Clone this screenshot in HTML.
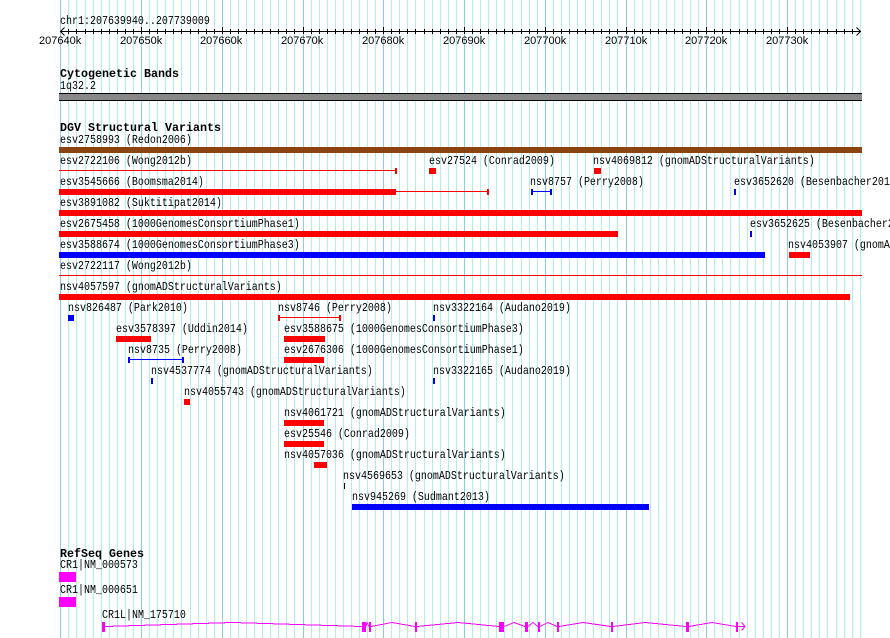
<!DOCTYPE html>
<html>
<head>
<meta charset="utf-8">
<title>Genome browser</title>
<style>
html,body{margin:0;padding:0;background:#fff;width:890px;height:638px;overflow:hidden}
svg{display:block}
text{font-family:"Liberation Mono",monospace;font-size:12px;fill:#000;transform-box:fill-box;transform-origin:0 0;transform:scaleX(.8333)}
text.b{font-weight:bold;font-size:12px;transform:scaleX(.9722)}
text.s{font-family:"Liberation Sans",sans-serif;font-size:11px;transform:none}
.c rect,.l,.x{shape-rendering:crispEdges}
</style>
</head>
<body>
<svg width="890" height="638" viewBox="0 0 890 638" xmlns="http://www.w3.org/2000/svg">
<path class="x" stroke="#afeeee" stroke-width="1" fill="none" d="M68.5 0V638M76.5 0V638M85.5 0V638M93.5 0V638M101.5 0V638M109.5 0V638M117.5 0V638M125.5 0V638M133.5 0V638M149.5 0V638M157.5 0V638M165.5 0V638M173.5 0V638M181.5 0V638M190.5 0V638M198.5 0V638M206.5 0V638M214.5 0V638M230.5 0V638M238.5 0V638M246.5 0V638M254.5 0V638M262.5 0V638M270.5 0V638M278.5 0V638M286.5 0V638M294.5 0V638M311.5 0V638M319.5 0V638M327.5 0V638M335.5 0V638M343.5 0V638M351.5 0V638M359.5 0V638M367.5 0V638M375.5 0V638M391.5 0V638M399.5 0V638M407.5 0V638M415.5 0V638M424.5 0V638M432.5 0V638M440.5 0V638M448.5 0V638M456.5 0V638M472.5 0V638M480.5 0V638M488.5 0V638M496.5 0V638M504.5 0V638M512.5 0V638M521.5 0V638M529.5 0V638M537.5 0V638M553.5 0V638M561.5 0V638M569.5 0V638M577.5 0V638M585.5 0V638M593.5 0V638M601.5 0V638M609.5 0V638M617.5 0V638M634.5 0V638M642.5 0V638M650.5 0V638M658.5 0V638M666.5 0V638M674.5 0V638M682.5 0V638M690.5 0V638M698.5 0V638M714.5 0V638M722.5 0V638M730.5 0V638M739.5 0V638M747.5 0V638M755.5 0V638M763.5 0V638M771.5 0V638M779.5 0V638M795.5 0V638M803.5 0V638M811.5 0V638M819.5 0V638M827.5 0V638M836.5 0V638M844.5 0V638M852.5 0V638M860.5 0V638"/>
<path class="x" stroke="#87ceeb" stroke-width="1" fill="none" d="M60.5 0V638M141.5 0V638M222.5 0V638M303.5 0V638M383.5 0V638M464.5 0V638M545.5 0V638M626.5 0V638M706.5 0V638M787.5 0V638"/>

<!-- ruler -->
<path class="x" stroke="#000" fill="none" d="M60 31.5H861M68.5 29V34M76.5 29V34M85.5 29V34M93.5 29V34M101.5 29V34M109.5 29V34M117.5 29V34M125.5 29V34M133.5 29V34M149.5 29V34M157.5 29V34M165.5 29V34M173.5 29V34M181.5 29V34M190.5 29V34M198.5 29V34M206.5 29V34M214.5 29V34M230.5 29V34M238.5 29V34M246.5 29V34M254.5 29V34M262.5 29V34M270.5 29V34M278.5 29V34M286.5 29V34M294.5 29V34M311.5 29V34M319.5 29V34M327.5 29V34M335.5 29V34M343.5 29V34M351.5 29V34M359.5 29V34M367.5 29V34M375.5 29V34M391.5 29V34M399.5 29V34M407.5 29V34M415.5 29V34M424.5 29V34M432.5 29V34M440.5 29V34M448.5 29V34M456.5 29V34M472.5 29V34M480.5 29V34M488.5 29V34M496.5 29V34M504.5 29V34M512.5 29V34M521.5 29V34M529.5 29V34M537.5 29V34M553.5 29V34M561.5 29V34M569.5 29V34M577.5 29V34M585.5 29V34M593.5 29V34M601.5 29V34M609.5 29V34M617.5 29V34M634.5 29V34M642.5 29V34M650.5 29V34M658.5 29V34M666.5 29V34M674.5 29V34M682.5 29V34M690.5 29V34M698.5 29V34M714.5 29V34M722.5 29V34M730.5 29V34M739.5 29V34M747.5 29V34M755.5 29V34M763.5 29V34M771.5 29V34M779.5 29V34M795.5 29V34M803.5 29V34M811.5 29V34M819.5 29V34M827.5 29V34M836.5 29V34M844.5 29V34M852.5 29V34M141.5 27V34M222.5 27V34M303.5 27V34M383.5 27V34M464.5 27V34M545.5 27V34M626.5 27V34M706.5 27V34M787.5 27V34"/>
<path stroke="#000" fill="none" d="M64.5 27.5L60.5 31.5L64.5 35.5M856.5 27.5L860.5 31.5L856.5 35.5"/>
<text class="s" x="39" y="44">207640k</text>
<text class="s" x="120" y="44">207650k</text>
<text class="s" x="200" y="44">207660k</text>
<text class="s" x="281" y="44">207670k</text>
<text class="s" x="362" y="44">207680k</text>
<text class="s" x="443" y="44">207690k</text>
<text class="s" x="524" y="44">207700k</text>
<text class="s" x="605" y="44">207710k</text>
<text class="s" x="685" y="44">207720k</text>
<text class="s" x="766" y="44">207730k</text>

<!-- cytogenetic -->
<text class="b" x="60" y="77">Cytogenetic Bands</text>
<g class="c">
<rect x="59" y="93" width="803" height="8" fill="#000"/>
<rect x="59" y="94" width="803" height="6" fill="#888888"/>
</g>

<!-- DGV -->
<text class="b" x="60" y="131">DGV Structural Variants</text>
<g class="c" fill="#f00">
<rect x="59" y="147" width="803" height="6" fill="#8b4513"/>
<rect x="59" y="170" width="337" height="1"/><rect x="395" y="168" width="2" height="6"/>
<rect x="429" y="168" width="7" height="6"/>
<rect x="594" y="168" width="7" height="6"/>
<rect x="59" y="189" width="337" height="6"/><rect x="396" y="191" width="92" height="1"/><rect x="487" y="189" width="2" height="6"/>
<rect x="531" y="189" width="2" height="6" fill="#00f"/><rect x="531" y="191" width="21" height="1" fill="#00f"/><rect x="550" y="189" width="2" height="6" fill="#00f"/>
<rect x="734" y="189" width="2" height="6" fill="#00f"/>
<rect x="59" y="210" width="803" height="6"/>
<rect x="59" y="231" width="559" height="6"/>
<rect x="750" y="231" width="2" height="6" fill="#00f"/>
<rect x="59" y="252" width="706" height="6" fill="#00f"/>
<rect x="789" y="252" width="21" height="6"/>
<rect x="59" y="275" width="803" height="1"/>
<rect x="59" y="294" width="791" height="6"/>
<rect x="68" y="315" width="6" height="6" fill="#00f"/>
<rect x="278" y="315" width="2" height="6"/><rect x="278" y="317" width="62" height="1"/><rect x="339" y="315" width="2" height="6"/>
<rect x="433" y="315" width="2" height="6" fill="#00f"/>
<rect x="116" y="336" width="35" height="6"/>
<rect x="284" y="336" width="41" height="6"/>
<rect x="128" y="357" width="2" height="6" fill="#00f"/><rect x="128" y="359" width="55" height="1" fill="#00f"/><rect x="182" y="357" width="2" height="6" fill="#00f"/>
<rect x="284" y="357" width="40" height="6"/>
<rect x="151" y="378" width="2" height="6" fill="#00f"/>
<rect x="433" y="378" width="2" height="6" fill="#00f"/>
<rect x="184" y="399" width="6" height="6"/>
<rect x="284" y="420" width="40" height="6"/>
<rect x="284" y="441" width="40" height="6"/>
<rect x="314" y="462" width="13" height="6"/>
<rect x="344" y="483" width="1" height="6" fill="#000"/>
<rect x="352" y="504" width="297" height="6" fill="#00f"/>
</g>
<g transform="translate(0,-1)">
<text x="60" y="25">chr1:207639940..207739009</text>
<text x="60" y="90">1q32.2</text>
<text x="60" y="144">esv2758993 (Redon2006)</text>
<text x="60" y="165">esv2722106 (Wong2012b)</text>
<text x="429" y="165">esv27524 (Conrad2009)</text>
<text x="593" y="165">nsv4069812 (gnomADStructuralVariants)</text>
<text x="60" y="186">esv3545666 (Boomsma2014)</text>
<text x="530" y="186">nsv8757 (Perry2008)</text>
<text x="734" y="186">esv3652620 (Besenbacher2014)</text>
<text x="60" y="207">esv3891082 (Suktitipat2014)</text>
<text x="60" y="228">esv2675458 (1000GenomesConsortiumPhase1)</text>
<text x="750" y="228">esv3652625 (Besenbacher2014)</text>
<text x="60" y="249">esv3588674 (1000GenomesConsortiumPhase3)</text>
<text x="788" y="249">nsv4053907 (gnomADStructuralVariants)</text>
<text x="60" y="270">esv2722117 (Wong2012b)</text>
<text x="60" y="291">nsv4057597 (gnomADStructuralVariants)</text>
<text x="68" y="312">nsv826487 (Park2010)</text>
<text x="278" y="312">nsv8746 (Perry2008)</text>
<text x="433" y="312">nsv3322164 (Audano2019)</text>
<text x="116" y="333">esv3578397 (Uddin2014)</text>
<text x="284" y="333">esv3588675 (1000GenomesConsortiumPhase3)</text>
<text x="128" y="354">nsv8735 (Perry2008)</text>
<text x="284" y="354">esv2676306 (1000GenomesConsortiumPhase1)</text>
<text x="151" y="375">nsv4537774 (gnomADStructuralVariants)</text>
<text x="433" y="375">nsv3322165 (Audano2019)</text>
<text x="184" y="396">nsv4055743 (gnomADStructuralVariants)</text>
<text x="284" y="417">nsv4061721 (gnomADStructuralVariants)</text>
<text x="284" y="438">esv25546 (Conrad2009)</text>
<text x="284" y="459">nsv4057036 (gnomADStructuralVariants)</text>
<text x="343" y="480">nsv4569653 (gnomADStructuralVariants)</text>
<text x="352" y="501">nsv945269 (Sudmant2013)</text>
<text x="60" y="569">CR1|NM_000573</text>
<text x="60" y="594">CR1|NM_000651</text>
<text x="102" y="619">CR1L|NM_175710</text>
</g>

<!-- RefSeq -->
<text class="b" x="60" y="557">RefSeq Genes</text>
<g class="c" fill="#f0f">
<rect x="59" y="572" width="17" height="10"/>
<rect x="59" y="597" width="17" height="10"/>
<rect x="102" y="622" width="3" height="10"/>
<rect x="362" y="622" width="4" height="10"/>
<rect x="369" y="622" width="2" height="10"/>
<rect x="415" y="622" width="2" height="10"/>
<rect x="499" y="622" width="5" height="10"/>
<rect x="525" y="622" width="3" height="10"/>
<rect x="538" y="622" width="2" height="10"/>
<rect x="557" y="622" width="2" height="10"/>
<rect x="611" y="622" width="2" height="10"/>
<rect x="686" y="622" width="3" height="10"/>
<rect x="736" y="622" width="2" height="10"/>
</g>
<polyline class="l" fill="none" stroke="#f0f" stroke-width="1" points="105,626.5 233,622.5 362,626.5 366,626.5 367,622.5 369,626.5 371,626.5 392,622.5 415,626.5 417,626.5 458,622.5 499,626.5 504,626.5 514,622.5 525,626.5 528,626.5 533,622.5 538,626.5 540,626.5 548,622.5 557,626.5 559,626.5 583,622.5 611,626.5 613,626.5 645,622.5 686,626.5 689,626.5 712,622.5 736,626.5 745,626.5"/>
<path fill="none" stroke="#f0f" d="M741.5 622.5L745 626.5L741.5 630.5"/>
</svg>
</body>
</html>
